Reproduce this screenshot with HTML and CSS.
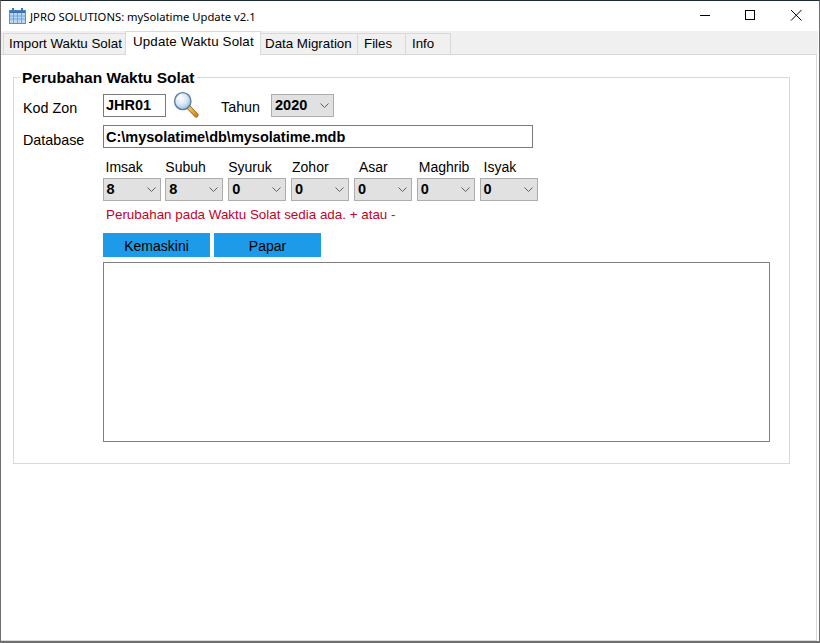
FILE: index.html
```html
<!DOCTYPE html>
<html lang="en">
<head>
  <meta charset="UTF-8">
  <title>JPRO SOLUTIONS: mySolatime Update v2.1</title>
  <link rel="stylesheet" href="styles.css">
</head>
<body>
  <div class="window">
    <div class="titlebar">
      <svg class="app-icon" width="17" height="16" viewBox="0 0 17 16">
        <defs>
          <linearGradient id="cal" x1="0" y1="0" x2="0" y2="1">
            <stop offset="0" stop-color="#4f86c6"/>
            <stop offset="1" stop-color="#2f68ad"/>
          </linearGradient>
        </defs>
        <rect x="0.5" y="2.5" width="16" height="13" fill="#bcd8f3" stroke="#5a8fca"/>
        <rect x="1" y="2" width="15" height="3" fill="url(#cal)"/>
        <rect x="3" y="0" width="2" height="4" fill="#3f78bb"/>
        <rect x="12" y="0" width="2" height="4" fill="#3f78bb"/>
        <path d="M1 8h15M1 11h15M4.500 5v10M8.500 5v10M12.500 5v10" stroke="#6fa4dc" stroke-width="1" fill="none"/>
      </svg>
      <span class="title">JPRO SOLUTIONS: mySolatime Update v2.1</span>
      <div class="controls">
        <svg width="46" height="30" viewBox="0 0 46 30"><path d="M19 14.500h10" stroke="#000" fill="none"/></svg>
        <svg width="46" height="30" viewBox="0 0 46 30"><rect x="18.500" y="9.500" width="9" height="9" stroke="#000" fill="none"/></svg>
        <svg width="46" height="30" viewBox="0 0 46 30"><path d="M18 9l10.500 10.500M28.500 9l-10.500 10.500" stroke="#000" fill="none"/></svg>
      </div>
    </div>

    <div class="tabs">
      <div class="tab tab-import">Import Waktu Solat</div>
      <div class="tab tab-update active">Update Waktu Solat</div>
      <div class="tab tab-migration">Data Migration</div>
      <div class="tab tab-files">Files</div>
      <div class="tab tab-info">Info</div>
    </div>

    <div class="page">
      <fieldset class="group">
        <legend>Perubahan Waktu Solat</legend>

        <div class="group-body">
          <div class="row row-zone">
            <label class="label">Kod Zon</label>
            <div class="field field-zone">JHR01</div>
            <svg class="search" width="26" height="27" viewBox="0 0 28 28" preserveAspectRatio="none">
              <defs>
                <radialGradient id="lens" cx="0.4" cy="0.35" r="0.7">
                  <stop offset="0" stop-color="#ffffff"/>
                  <stop offset="0.55" stop-color="#d3e5f7"/>
                  <stop offset="1" stop-color="#8fb4da"/>
                </radialGradient>
                <linearGradient id="grip" x1="0" y1="0" x2="1" y2="1">
                  <stop offset="0" stop-color="#f8c66b"/>
                  <stop offset="1" stop-color="#d9861c"/>
                </linearGradient>
              </defs>
              <path d="M17.500 17.500l7.500 7.500" stroke="#9a6a24" stroke-width="5" stroke-linecap="round"/>
              <path d="M17.500 17.500l7.500 7.500" stroke="url(#grip)" stroke-width="3" stroke-linecap="round"/>
              <circle cx="10.500" cy="10.500" r="8.800" fill="url(#lens)" stroke="#5f7f9f" stroke-width="1.500"/>
              <path d="M5 9a6 6 0 0 1 5-4.500" stroke="#fff" stroke-width="1.500" fill="none"/>
            </svg>
            <label class="label label-year">Tahun</label>
            <div class="combo combo-year">2020
              <svg class="chevron" width="9" height="5" viewBox="0 0 9 5"><path d="M0.500 0.500l4 4 4-4" stroke="#606060" fill="none"/></svg>
            </div>
          </div>

          <div class="row row-db">
            <label class="label">Database</label>
            <div class="field field-db">C:\mysolatime\db\mysolatime.mdb</div>
          </div>

          <div class="times">
            <div class="time">
              <span class="time-name name-imsak">Imsak</span>
              <div class="combo">8<svg class="chevron" width="9" height="5" viewBox="0 0 9 5"><path d="M0.500 0.500l4 4 4-4" stroke="#606060" fill="none"/></svg></div>
            </div>
            <div class="time">
              <span class="time-name">Subuh</span>
              <div class="combo">8<svg class="chevron" width="9" height="5" viewBox="0 0 9 5"><path d="M0.500 0.500l4 4 4-4" stroke="#606060" fill="none"/></svg></div>
            </div>
            <div class="time">
              <span class="time-name">Syuruk</span>
              <div class="combo">0<svg class="chevron" width="9" height="5" viewBox="0 0 9 5"><path d="M0.500 0.500l4 4 4-4" stroke="#606060" fill="none"/></svg></div>
            </div>
            <div class="time">
              <span class="time-name name-zohor">Zohor</span>
              <div class="combo">0<svg class="chevron" width="9" height="5" viewBox="0 0 9 5"><path d="M0.500 0.500l4 4 4-4" stroke="#606060" fill="none"/></svg></div>
            </div>
            <div class="time">
              <span class="time-name name-asar">Asar</span>
              <div class="combo">0<svg class="chevron" width="9" height="5" viewBox="0 0 9 5"><path d="M0.500 0.500l4 4 4-4" stroke="#606060" fill="none"/></svg></div>
            </div>
            <div class="time">
              <span class="time-name name-maghrib">Maghrib</span>
              <div class="combo">0<svg class="chevron" width="9" height="5" viewBox="0 0 9 5"><path d="M0.500 0.500l4 4 4-4" stroke="#606060" fill="none"/></svg></div>
            </div>
            <div class="time">
              <span class="time-name name-isyak">Isyak</span>
              <div class="combo">0<svg class="chevron" width="9" height="5" viewBox="0 0 9 5"><path d="M0.500 0.500l4 4 4-4" stroke="#606060" fill="none"/></svg></div>
            </div>
          </div>

          <p class="note">Perubahan pada Waktu Solat sedia ada. + atau -</p>

          <div class="buttons">
            <div class="btn">Kemaskini</div>
            <div class="btn">Papar</div>
          </div>

          <div class="output"></div>
        </div>
      </fieldset>
    </div>
  </div>
</body>
</html>
```

FILE: styles.css
```css
* {
  box-sizing: border-box;
}

html, body {
  margin: 0;
  height: 100%;
  background: #fff;
  color: #000;
  font-family: "Liberation Sans", Arial, sans-serif;
  font-size: 13.33px;
}

.window {
  height: 643px;
  display: flex;
  flex-direction: column;
  border: 1px solid #6f6f6f;
  border-top-color: #1b2a33;
  border-bottom-width: 2px;
  overflow: hidden;
}

/* title bar */
.titlebar {
  height: 30px;
  display: flex;
  align-items: center;
  flex: none;
  padding-left: 8px;
}
.app-icon {
  flex: none;
}
.title {
  margin-left: 4px;
  font-family: "Noto Sans", sans-serif;
  font-size: 11.25px;
  color: #000;
}
.controls {
  margin-left: auto;
  display: flex;
}
.controls svg {
  display: block;
}

/* tabs */
.tabs {
  height: 23px;
  flex: none;
  display: flex;
  align-items: flex-end;
  background: #f0f0f0;
  padding-left: 2px;
  margin-right: 1px;
}
.tab {
  height: 21px;
  padding: 2px 0 0 5px;
  background: #f0f0f0;
  border: 1px solid #d9d9d9;
  border-bottom: 0;
  margin-right: -1px;
  white-space: nowrap;
}
.tab-import { width: 123px; }
.tab-update { width: 136px; padding-left: 7px; letter-spacing: 0.15px; }
.tab-migration { width: 98px; padding-left: 4px; }
.tab-files { width: 49px; padding-left: 6px; }
.tab-info { width: 46px; padding-left: 6px; }
.tab.active {
  height: 24px;
  margin-bottom: -1px;
  padding-top: 2px;
  background: #fff;
  position: relative;
  z-index: 1;
}

/* tab page */
.page {
  flex: 1;
  border: 1px solid #d9d9d9;
  border-left: 0;
  margin-right: 2px;
  padding: 14px 26px 0 12px;
}
.group {
  margin: 0;
  padding: 0;
  border: 1px solid #d9d9d9;
  height: 395px;
}
.group legend {
  margin-left: 6px;
  padding: 0 2px;
  font-weight: bold;
  font-size: 15.5px;
  line-height: 17px;
  height: 17px;
}
.group-body {
  padding-left: 89px;
}

.row {
  display: flex;
  align-items: center;
  position: relative;
}
.row-zone {
  margin-top: 8px;
  height: 23px;
}
.row-db {
  margin-top: 8px;
  height: 23px;
}
.label {
  width: 80px;
  margin-left: -80px;
  flex: none;
  font-size: 14.33px;
  position: relative;
  top: 2px;
}
.label-year {
  width: auto;
  margin: 0 0 0 22px;
  top: 1px;
}
.row-db .label {
  top: 3px;
}

.field {
  height: 23px;
  border: 1px solid #7a7a7a;
  background: #fff;
  font-weight: bold;
  font-size: 14.5px;
  line-height: 21px;
  padding-left: 2px;
  white-space: nowrap;
}
.field-zone { width: 63px; }
.field-db { width: 430px; line-height: 22px; }
.search {
  flex: none;
  margin: -2px 0 0 7px;
}

.combo {
  height: 23px;
  width: 58px;
  position: relative;
  background: #e1e1e1;
  border: 1px solid #adadad;
  font-weight: bold;
  font-size: 14.5px;
  line-height: 21px;
  padding-left: 3px;
}
.combo-year {
  width: 63px;
  margin-left: 11px;
}
.chevron {
  position: absolute;
  right: 4px;
  top: 8px;
}

.times {
  display: grid;
  grid-template-columns: repeat(7, 58px);
  column-gap: 4.85px;
  margin: 11px 0 0 -0.5px;
}
.time-name {
  display: block;
  font-size: 14px;
  line-height: 17px;
  height: 19px;
}
.name-imsak { padding-left: 3px; }
.name-zohor { padding-left: 1px; }
.name-asar { padding-left: 5px; }
.name-maghrib { padding-left: 2px; }
.name-isyak { padding-left: 4px; }

.note {
  margin: 6px 0 0 3px;
  color: #c4002a;
  font-size: 13.4px;
  line-height: 15px;
}

.buttons {
  display: flex;
  gap: 4px;
  margin-top: 11px;
}
.btn {
  width: 107px;
  height: 24px;
  background: #1e9be8;
  text-align: center;
  font-size: 14px;
  line-height: 26px;
}

.output {
  width: 667px;
  height: 180px;
  margin-top: 5px;
  border: 1px solid #808080;
  background: #fff;
}
```
